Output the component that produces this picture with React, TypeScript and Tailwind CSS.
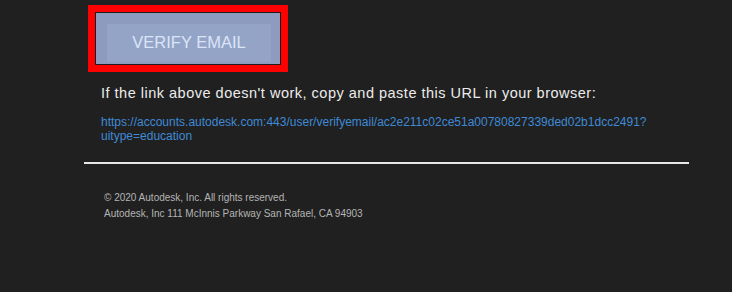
export default function App() {
  return (
    <div
      className="w-[732px] h-[292px] bg-[#202020] overflow-hidden"
      style={{ fontFamily: '"Liberation Sans", Arial, sans-serif' }}
    >
      <div className="ml-[84px] w-[605px] pt-[5px] flex flex-col">
        {/* highlighted button */}
        <div className="ml-[4px] w-[200px] h-[67px] border-[7px] border-[#ff0000] bg-[#1c1c1c] p-px">
          <div className="h-full bg-[#8d9cbe] pt-[11px] pl-[11px] pr-[9px] pb-[2px]">
            <div className="h-full bg-[#94a4c7] flex items-center justify-center text-[16.5px] text-[#dbe4f7] pb-[2px]">
              VERIFY EMAIL
            </div>
          </div>
        </div>

        <p className="mt-[13px] pl-[17px] text-[14.5px] tracking-[0.5px] leading-[17px] text-[#ececec]">
          If the link above doesn't work, copy and paste this URL in your browser:
        </p>

        <a className="mt-[13px] pl-[17px] block text-[12px] leading-[14px] text-[#3f8ad6] w-[575px] break-all">
          https://accounts.autodesk.com:443/user/verifyemail/ac2e211c02ce51a00780827339ded02b1dcc2491?
          <br />
          uitype=education
        </a>

        <div className="mt-[19px] h-[2px] bg-[#e6e6e6]" />

        <div className="mt-[26px] pl-[20px] text-[10px] leading-[16px] text-[#b4b4b4]">
          <div>© 2020 Autodesk, Inc. All rights reserved.</div>
          <div>Autodesk, Inc 111 McInnis Parkway San Rafael, CA 94903</div>
        </div>
      </div>
    </div>
  );
}
